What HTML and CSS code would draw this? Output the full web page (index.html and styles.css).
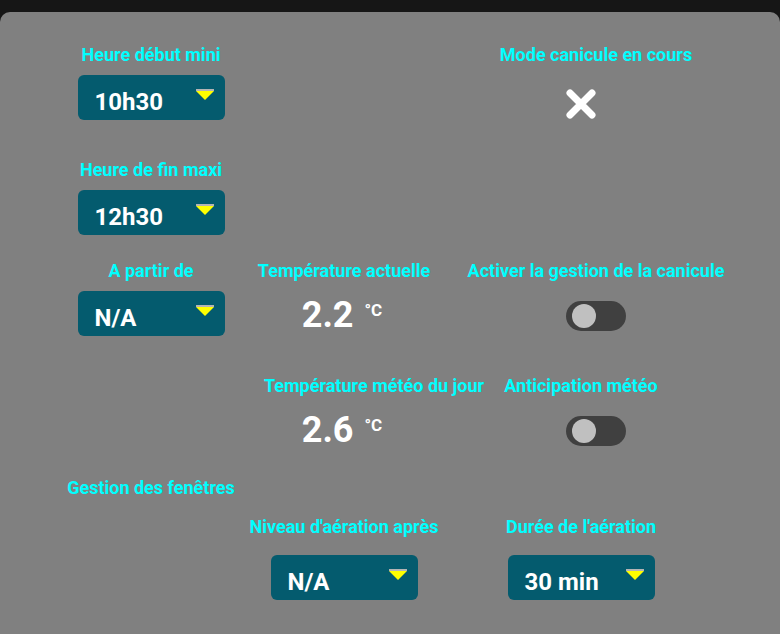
FILE: index.html
```html
<!DOCTYPE html>
<html lang="fr">
<head>
    <meta charset="UTF-8">
    <meta name="viewport" content="width=device-width, initial-scale=1.0">
    <title>Canicule</title>
    <link rel="stylesheet" href="styles.css">
</head>
<body>
    <div class="topbar"></div>
    <div class="panel">
        <div class="row row1">
            <div class="cell">
                <div class="label">Heure début mini</div>
                <div class="select"><span>10h30</span>
                    <svg class="arrow" width="18" height="11" viewBox="0 0 18 11"><rect x="0" y="0" width="18" height="2" fill="#b4b4b4"/><polygon points="0,2 18,2 9,11" fill="#ffff00"/></svg>
                </div>
            </div>
            <div class="cell"></div>
            <div class="cell">
                <div class="label">Mode canicule en cours</div>
                <svg class="cross left" width="32" height="32" viewBox="0 0 32 32"><path d="M5 5 L27 27 M27 5 L5 27" stroke="#fff" stroke-width="7" stroke-linecap="round"/></svg>
            </div>
        </div>

        <div class="row row2">
            <div class="cell">
                <div class="label">Heure de fin maxi</div>
                <div class="select"><span>12h30</span>
                    <svg class="arrow" width="18" height="11" viewBox="0 0 18 11"><rect x="0" y="0" width="18" height="2" fill="#b4b4b4"/><polygon points="0,2 18,2 9,11" fill="#ffff00"/></svg>
                </div>
            </div>
        </div>

        <div class="row row3">
            <div class="cell">
                <div class="label">A partir de</div>
                <div class="select"><span>N/A</span>
                    <svg class="arrow" width="18" height="11" viewBox="0 0 18 11"><rect x="0" y="0" width="18" height="2" fill="#b4b4b4"/><polygon points="0,2 18,2 9,11" fill="#ffff00"/></svg>
                </div>
            </div>
            <div class="cell">
                <div class="label">Température actuelle</div>
                <div class="temp"><span class="num">2.2</span><span class="unit">°C</span></div>
            </div>
            <div class="cell">
                <div class="label">Activer la gestion de la canicule</div>
                <div class="toggle"><span class="knob"></span></div>
            </div>
        </div>

        <div class="row row4">
            <div class="cell"></div>
            <div class="cell">
                <div class="label right">Température météo du jour</div>
                <div class="temp"><span class="num">2.6</span><span class="unit">°C</span></div>
            </div>
            <div class="cell">
                <div class="label left">Anticipation météo</div>
                <div class="toggle"><span class="knob"></span></div>
            </div>
        </div>

        <div class="row row5">
            <div class="cell">
                <div class="label">Gestion des fenêtres</div>
            </div>
        </div>

        <div class="row row6">
            <div class="cell"></div>
            <div class="cell">
                <div class="label">Niveau d'aération après</div>
                <div class="select"><span>N/A</span>
                    <svg class="arrow" width="18" height="11" viewBox="0 0 18 11"><rect x="0" y="0" width="18" height="2" fill="#b4b4b4"/><polygon points="0,2 18,2 9,11" fill="#ffff00"/></svg>
                </div>
            </div>
            <div class="cell">
                <div class="label left">Durée de l'aération</div>
                <div class="select left"><span>30 min</span>
                    <svg class="arrow" width="18" height="11" viewBox="0 0 18 11"><rect x="0" y="0" width="18" height="2" fill="#b4b4b4"/><polygon points="0,2 18,2 9,11" fill="#ffff00"/></svg>
                </div>
            </div>
        </div>
    </div>
</body>
</html>
```

FILE: styles.css
```css
html, body {
    margin: 0;
    padding: 0;
    height: 100%;
}
body {
    font-family: Roboto, 'Liberation Sans', sans-serif;
    font-weight: bold;
    background-color: #161616;
    overflow: hidden;
}
.topbar {
    height: 12px;
}
.panel {
    background-color: #808080;
    border-radius: 10px 10px 0 0;
    height: 622px;
    padding: 33px 0 0 40px;
    box-sizing: border-box;
}
.row {
    display: grid;
    grid-template-columns: 222px 164px 340px;
}
.cell {
    display: flex;
    flex-direction: column;
    align-items: center;
}
.label {
    color: #00ffff;
    font-size: 18px;
    line-height: 20px;
    white-space: nowrap;
    margin-bottom: 10px;
}
.left {
    margin-right: 30px;
}
.right {
    margin-left: 60px;
}
.select {
    width: 147px;
    height: 45px;
    background-color: #045b6e;
    border-radius: 6px;
    box-sizing: border-box;
    padding: 0 11px 0 17px;
    display: flex;
    align-items: center;
    justify-content: space-between;
    color: white;
    font-size: 24px;
}
.select span {
    padding-top: 8px;
}
.arrow {
    margin-top: -6px;
}
.cross {
    margin-top: 13px;
}
.temp {
    display: flex;
    align-items: flex-start;
    color: white;
    margin-top: 4px;
    margin-right: 4px;
}
.temp .num {
    font-size: 36px;
    line-height: 40px;
}
.temp .unit {
    font-size: 17px;
    line-height: 20px;
    margin-left: 11px;
    margin-top: 5px;
}
.toggle {
    width: 60px;
    height: 30px;
    border-radius: 15px;
    background-color: #404040;
    position: relative;
    margin-top: 10px;
}
.knob {
    position: absolute;
    left: 6px;
    top: 3px;
    width: 24px;
    height: 24px;
    border-radius: 50%;
    background-color: #c0c0c0;
}
.row2 {
    margin-top: 40px;
}
.row3 {
    margin-top: 26px;
}
.row4 {
    margin-top: 40px;
}
.row5 {
    margin-top: 28px;
}
.row5 .label {
    margin-bottom: 0;
}
.row6 {
    margin-top: 19px;
}
.row6 .label {
    margin-bottom: 18px;
}
```
